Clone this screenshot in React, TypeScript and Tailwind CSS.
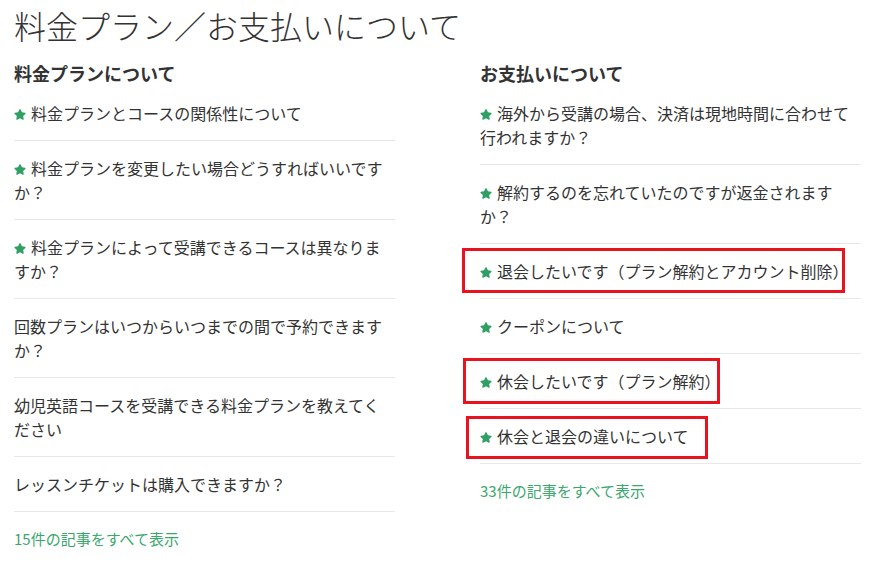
import React from "react";

type Item = { text: string; star?: boolean };

const left: Item[] = [
  { text: "料金プランとコースの関係性について", star: true },
  { text: "料金プランを変更したい場合どうすればいいですか？", star: true },
  { text: "料金プランによって受講できるコースは異なりますか？", star: true },
  { text: "回数プランはいつからいつまでの間で予約できますか？" },
  { text: "幼児英語コースを受講できる料金プランを教えてください" },
  { text: "レッスンチケットは購入できますか？" },
];

const right: Item[] = [
  { text: "海外から受講の場合、決済は現地時間に合わせて行われますか？", star: true },
  { text: "解約するのを忘れていたのですが返金されますか？", star: true },
  { text: "退会したいです（プラン解約とアカウント削除）", star: true },
  { text: "クーポンについて", star: true },
  { text: "休会したいです（プラン解約）", star: true },
  { text: "休会と退会の違いについて", star: true },
];

function Star() {
  return (
    <svg
      viewBox="0 0 576 512"
      className="inline-block w-[12px] h-[11px] mr-[5px] align-[0px] fill-[#2f9f64]"
    >
      <path d="M259.3 17.8L194 150.2 47.9 171.5c-26.2 3.8-36.7 36.1-17.7 54.6l105.7 103-25 145.5c-4.5 26.3 23.2 46 46.4 33.7L288 439.6l130.7 68.7c23.2 12.2 50.9-7.4 46.4-33.7l-25-145.5 105.7-103c19-18.5 8.5-50.8-17.7-54.6L382 150.2 316.7 17.8c-11.7-23.6-45.6-23.9-57.4 0z" />
    </svg>
  );
}

function Column({ title, items, more }: { title: string; items: Item[]; more: string }) {
  return (
    <div className="flex flex-col">
      <h2 className="text-[18px] font-bold leading-[26px] text-[#333] mt-[60px]">{title}</h2>
      <ul className="flex flex-col">
        {items.map((it, i) => (
          <li key={i} className="border-b border-[#e8e8e8] py-[15px]">
            <a className="text-[16px] leading-[24px] text-[#333]">
              {it.star && <Star />}
              {it.text}
            </a>
          </li>
        ))}
      </ul>
      <a className="text-[15px] leading-[24px] text-[#3aa76d] mt-[15px]">{more}</a>
    </div>
  );
}

export default function App() {
  return (
    <div
      className="relative w-[884px] h-[566px] bg-white overflow-hidden px-[14px]"
      style={{ fontFamily: '"Noto Sans CJK JP", "Noto Sans", sans-serif' }}
    >
      <h1 className="absolute left-[14px] top-[3px] text-[32px] leading-[44px] font-light text-[#333]">
        料金プラン／お支払いについて
      </h1>
      <div className="grid grid-cols-[381px_381px] gap-x-[85px]">
        <Column title="料金プランについて" items={left} more="15件の記事をすべて表示" />
        <Column title="お支払いについて" items={right} more="33件の記事をすべて表示" />
      </div>
      <div className="absolute left-[462px] top-[248px] w-[383px] h-[45px] border-[3px] border-[#e8131f]" />
      <div className="absolute left-[463px] top-[358px] w-[257px] h-[46px] border-[3px] border-[#e8131f]" />
      <div className="absolute left-[466px] top-[416px] w-[242px] h-[43px] border-[3px] border-[#e8131f]" />
    </div>
  );
}
